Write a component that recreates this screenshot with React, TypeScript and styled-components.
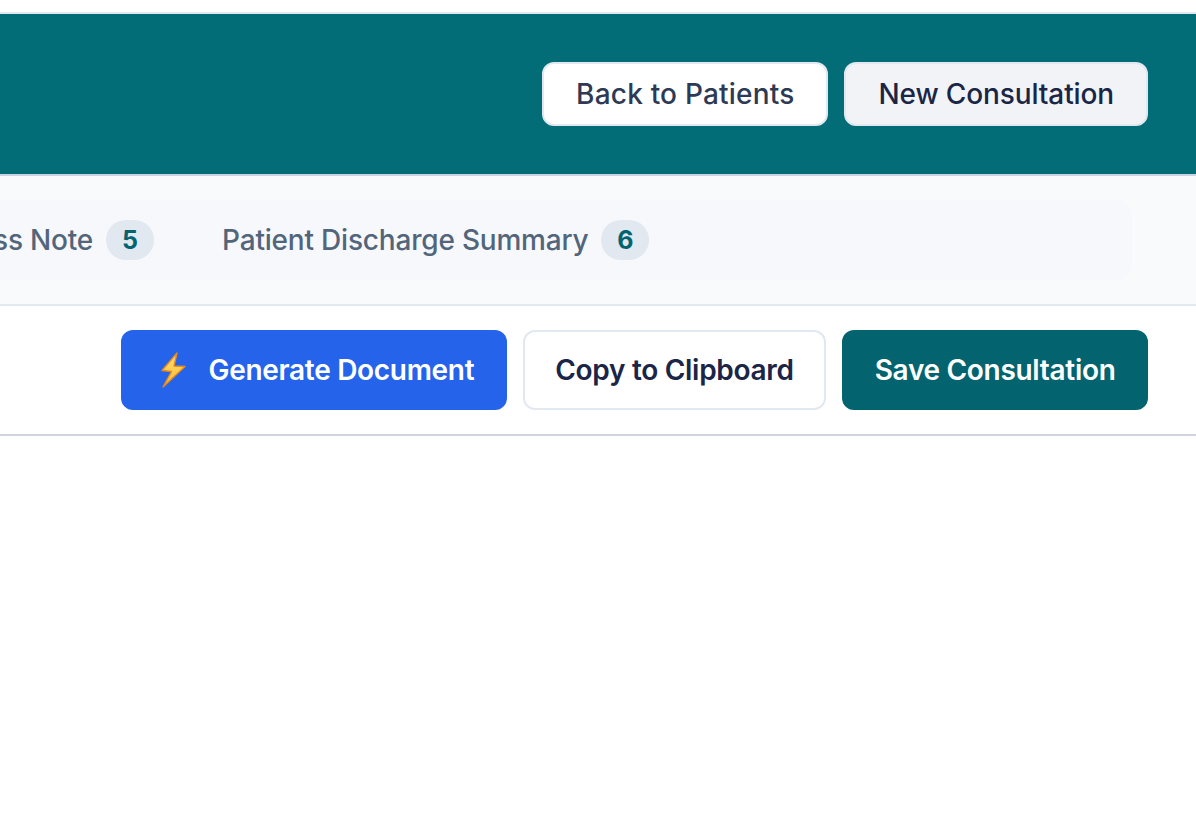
import styled, { createGlobalStyle } from "styled-components";

const GlobalStyle = createGlobalStyle`
  html, body {
    margin: 0;
    padding: 0;
    background: #ffffff;
    overflow: hidden;
  }

  body {
    font-family: "Inter", "Liberation Sans", sans-serif;
  }
`;

const tabs = [
  { label: "Progress Note", count: 5 },
  { label: "Patient Discharge Summary", count: 6 },
];

const BoltIcon = () => (
  <BoltSvg width="26" height="36" viewBox="0 0 26 36" fill="none" aria-hidden="true">
    <defs>
      <linearGradient id="bolt" x1="0" y1="0" x2="0" y2="1">
        <stop offset="0" stopColor="#ffe27a" />
        <stop offset="1" stopColor="#fbb829" />
      </linearGradient>
    </defs>
    <path
      d="M17 1 L2 18.5 L11.5 19.5 L3 35 L25 14.5 L14 14 Z"
      fill="url(#bolt)"
      stroke="#e8891c"
      strokeWidth="1.4"
      strokeLinejoin="round"
    />
  </BoltSvg>
);

export default function App() {
  return (
    <>
      <GlobalStyle />
      <Page>
        <Header>
          <OutlineLink>Back to Patients</OutlineLink>
          <SoftLink>New Consultation</SoftLink>
        </Header>
        <TabBar>
          <TabList>
            {tabs.map((tab) => (
              <Tab key={tab.label}>
                {tab.label}
                <Badge>{tab.count}</Badge>
              </Tab>
            ))}
          </TabList>
        </TabBar>
        <ActionBar>
          <ActionButton $variant="blue">
            <BoltIcon />
            Generate Document
          </ActionButton>
          <ActionButton $variant="plain">Copy to Clipboard</ActionButton>
          <ActionButton $variant="teal">Save Consultation</ActionButton>
        </ActionBar>
      </Page>
    </>
  );
}

const Page = styled.div`
  width: 1196px;
  height: 828px;
  padding-top: 12px;
  box-sizing: border-box;
  overflow: hidden;
  background: #ffffff;
`;

// Top banner

const Header = styled.header`
  height: 160px;
  padding: 0 48px;
  display: flex;
  align-items: center;
  justify-content: flex-end;
  gap: 16px;
  background: #026d77;
  border-top: 2px solid #e2e8f0;
  border-bottom: 2px solid #cbd5e1;
`;

const HeaderLink = styled.a`
  height: 64px;
  padding: 0 32px;
  box-sizing: border-box;
  display: flex;
  align-items: center;
  border: 2px solid #e2e8f0;
  border-radius: 12px;
  font-size: 28px;
  font-weight: 500;
  white-space: nowrap;
`;

const OutlineLink = styled(HeaderLink)`
  background: #ffffff;
  color: #2d3a55;
  letter-spacing: 0.2px;
`;

const SoftLink = styled(HeaderLink)`
  background: #f1f3f6;
  color: #1a2547;
  letter-spacing: -0.12px;
`;

// Tabs

const TabBar = styled.nav`
  height: 130px;
  padding: 24px 64px 24px 0;
  box-sizing: border-box;
  background: #f8fafc;
  border-bottom: 2px solid #e2e8f0;
`;

const TabList = styled.div`
  height: 80px;
  display: flex;
  align-items: center;
  gap: 4px;
  margin-left: -127px;
  background: #f6f8fc;
  border-radius: 16px;
`;

const Tab = styled.div`
  padding: 0 32px;
  display: flex;
  align-items: center;
  gap: 13px;
  color: #52657a;
  font-size: 28px;
  font-weight: 500;
  letter-spacing: -0.2px;
  white-space: nowrap;
`;

const Badge = styled.span`
  width: 48px;
  height: 40px;
  display: flex;
  align-items: center;
  justify-content: center;
  border-radius: 20px;
  background: #e2e8f0;
  color: #03646f;
  font-size: 25px;
  font-weight: 700;
  letter-spacing: 0;
`;

// Document actions

const ActionBar = styled.div`
  height: 130px;
  padding: 0 48px;
  box-sizing: border-box;
  display: flex;
  align-items: center;
  justify-content: flex-end;
  gap: 16px;
  background: #ffffff;
  border-bottom: 2px solid #d1d5db;
`;

const variants = {
  blue: "background: #2563eb; color: #ffffff; border-color: #2563eb;",
  plain: "background: #ffffff; color: #1a2547; border-color: #e2e8f0;",
  teal: "background: #03646f; color: #ffffff; border-color: #03646f;",
};

const ActionButton = styled.button<{ $variant: keyof typeof variants }>`
  height: 80px;
  padding: 0 30.5px;
  box-sizing: border-box;
  display: flex;
  align-items: center;
  gap: 16px;
  border: 2px solid;
  border-radius: 12px;
  font-family: inherit;
  font-size: 28px;
  font-weight: 570;
  letter-spacing: -0.3px;
  white-space: nowrap;
  ${(p) => variants[p.$variant]}
`;

const BoltSvg = styled.svg`
  margin: 0 6.5px;
  flex: none;
`;
